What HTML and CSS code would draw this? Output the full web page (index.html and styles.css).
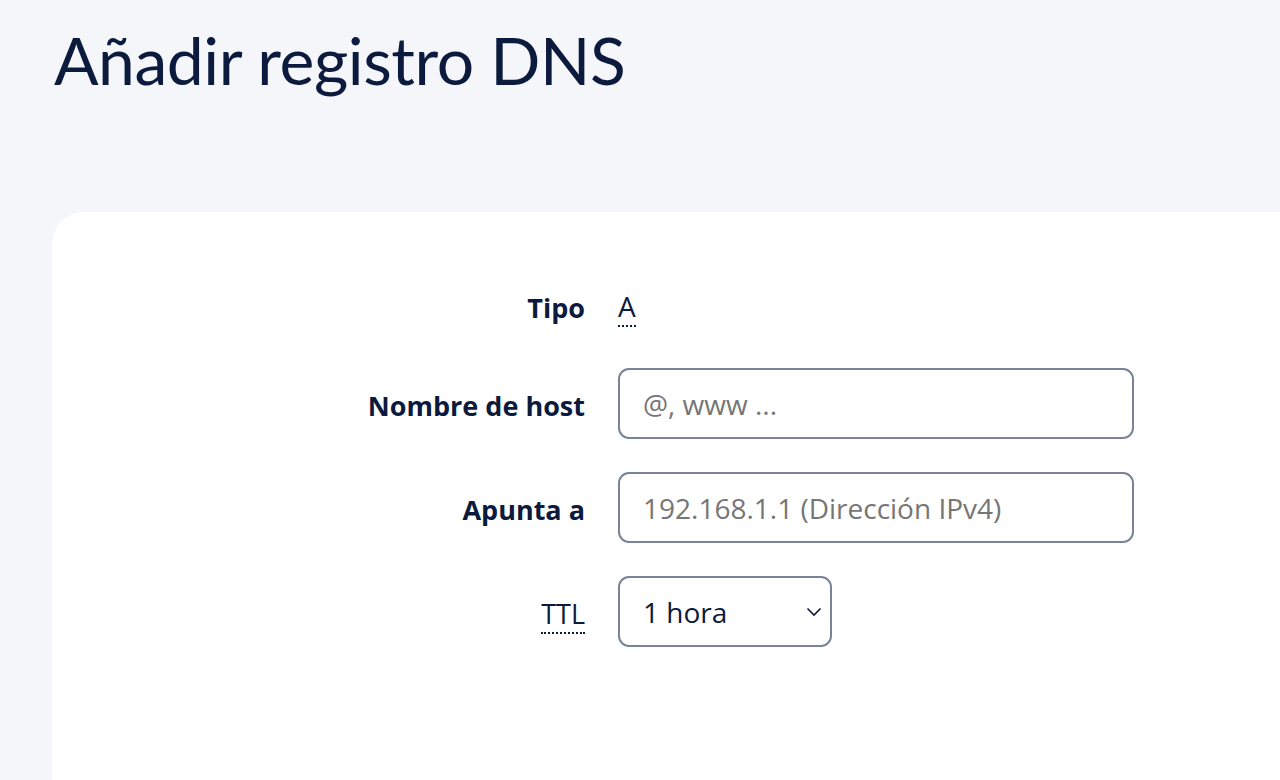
FILE: index.html
```html
<!DOCTYPE html>
<html lang="es">
<head>
<meta charset="utf-8">
<link rel="stylesheet" href="styles.css">
</head>
<body>
<main class="page">
  <h1 class="title">Añadir registro DNS</h1>
  <section class="card">
    <form class="form">
      <div class="row row-type">
        <span class="label">Tipo</span>
        <span class="value"><abbr class="dotted">A</abbr></span>
      </div>
      <div class="row">
        <label class="label" for="host">Nombre de host</label>
        <input id="host" class="field field-wide" type="text" placeholder="@, www ...">
      </div>
      <div class="row">
        <label class="label" for="dest">Apunta a</label>
        <input id="dest" class="field field-wide" type="text" placeholder="192.168.1.1 (Dirección IPv4)">
      </div>
      <div class="row">
        <label class="label label-normal" for="ttl"><abbr class="dotted">TTL</abbr></label>
        <div class="select">
          <span class="select-text">1 hora</span>
          <svg class="chev" width="16" height="10" viewBox="0 0 16 10"><path d="M1.5 1.5l6.5 6.5 6.5-6.5" fill="none" stroke="#0b1a3d" stroke-width="1.6"/></svg>
        </div>
      </div>
    </form>
  </section>
</main>
</body>
</html>
```
FILE: styles.css
```css
html, body {
  margin: 0;
  padding: 0;
  background: #f5f6fa;
  height: 100%;
  overflow: hidden;
}
body {
  font-family: "Open Sans", "Noto Sans", sans-serif;
  color: #0b1a3d;
}
.page {
  box-sizing: border-box;
  height: 780px;
  padding: 20px 0 0 52px;
  display: flex;
  flex-direction: column;
}
.title {
  margin: 0 0 0 2px;
  font-family: "Lato", "Open Sans", sans-serif;
  font-weight: 400;
  font-size: 66px;
  line-height: 80px;
  letter-spacing: -0.45px;
  color: #0b1a3d;
}
.card {
  flex: 1;
  margin-top: 112px;
  background: #ffffff;
  border-radius: 32px 0 0 0;
  padding-top: 72px;
}
.form {
  display: flex;
  flex-direction: column;
  gap: 33px;
}
.row {
  display: grid;
  grid-template-columns: 533px auto;
  column-gap: 33px;
  align-items: center;
}
.row-type {
  height: 44px;
  margin-bottom: 7px;
}
.label {
  justify-self: end;
  font-size: 27px;
  font-weight: 700;
  padding-top: 3px;
}
.label-normal {
  font-weight: 400;
}
.value {
  font-size: 28px;
}
.dotted {
  text-decoration: none;
  border-bottom: 2px dotted #0b1a3d;
}
.field {
  box-sizing: border-box;
  height: 71px;
  border: 2px solid #7a8499;
  border-radius: 11px;
  background: #fff;
  font-family: "Open Sans", "Noto Sans", sans-serif;
  font-size: 28px;
  color: #0b1a3d;
  padding: 0 23px;
  outline: none;
}
.field::placeholder {
  color: #767676;
}
.field-wide {
  width: 516px;
}
.select {
  box-sizing: border-box;
  width: 214px;
  height: 71px;
  border: 2px solid #7a8499;
  border-radius: 11px;
  display: flex;
  align-items: center;
  justify-content: space-between;
  padding: 0 8px 0 23px;
}
.select-text {
  font-size: 28px;
}
```
